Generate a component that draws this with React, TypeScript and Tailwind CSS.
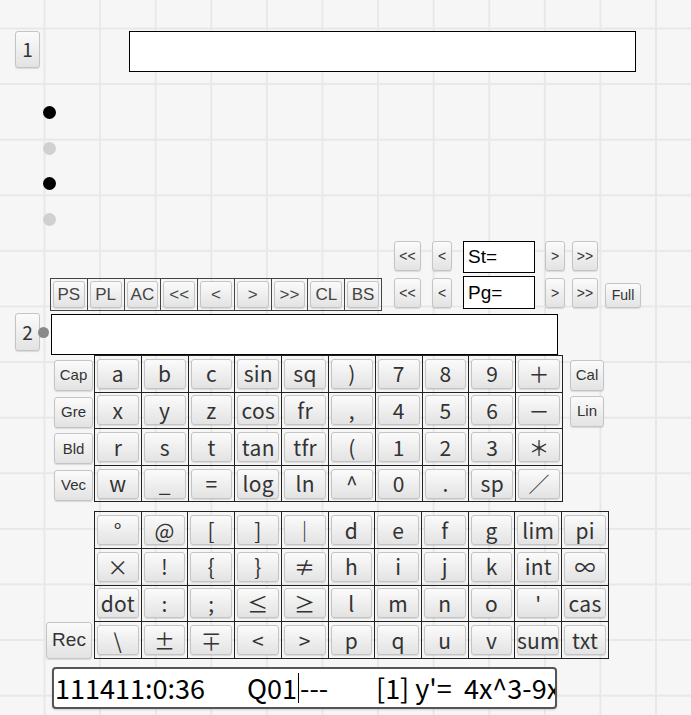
import React from 'react';

const btn =
  'flex items-center justify-center bg-linear-to-b from-[#fbfbfb] to-[#e3e3e3] border border-[#c4c4c4] rounded-[3px] shadow-[0_1px_1px_rgba(0,0,0,0.12)] text-[#333] whitespace-nowrap overflow-hidden';
const sans = "font-['Liberation_Sans',Arial,sans-serif]";
const jp = "font-['Noto_Sans_CJK_JP',sans-serif]";

const pad1: string[][] = [
  ['a', 'b', 'c', 'sin', 'sq', ')', '7', '8', '9', '＋'],
  ['x', 'y', 'z', 'cos', 'fr', ',', '4', '5', '6', '－'],
  ['r', 's', 't', 'tan', 'tfr', '(', '1', '2', '3', '＊'],
  ['w', '_', '=', 'log', 'ln', '^', '0', '.', 'sp', '／'],
];

const pad2: string[][] = [
  ['°', '@', '[', ']', '｜', 'd', 'e', 'f', 'g', 'lim', 'pi'],
  ['×', '!', '{', '}', '≠', 'h', 'i', 'j', 'k', 'int', '∞'],
  ['dot', ':', ';', '≤', '≥', 'l', 'm', 'n', 'o', "'", 'cas'],
  ['\\', '±', '∓', '<', '>', 'p', 'q', 'u', 'v', 'sum', 'txt'],
];

const tools = ['PS', 'PL', 'AC', '<<', '<', '>', '>>', 'CL', 'BS'];

// keypad table, each cell holds one button
const KeyTable: React.FC<{ rows: string[][]; width: string }> = ({ rows, width }) => (
  <table className={`border-collapse table-fixed ${width}`}>
    <tbody>
      {rows.map((row, r) => (
        <tr key={r} className="h-[36.6px]">
          {row.map((k, c) => (
            <td key={c} className="border border-[#222] p-[2px]">
              <div className={`${btn} ${jp} h-[30px] text-[21px] leading-none tracking-[0.3px] text-[#3a3a3a]`}>{k}</div>
            </td>
          ))}
        </tr>
      ))}
    </tbody>
  </table>
);

const SideBtn: React.FC<{ label: string; w: string }> = ({ label, w }) => (
  <div className={`${btn} ${sans} ${w} h-[31px] text-[15px] text-[#222]`}>{label}</div>
);

const NavBtn: React.FC<{ label: string; w: string; extra?: string }> = ({ label, w, extra }) => (
  <div className={`${btn} ${sans} ${w} h-[30px] text-[14px] text-[#222] ${extra ?? ''}`}>{label}</div>
);

export default function App() {
  return (
    <div className="w-[691px] h-[715px] overflow-hidden bg-[#f6f6f6] bg-[linear-gradient(90deg,#e8e8e8_2px,transparent_2px),linear-gradient(#e8e8e8_2px,transparent_2px)] bg-[length:55.6px_55.6px] bg-[position:43.5px_27.5px]">
      {/* Row 1: index + title box */}
      <div className="flex items-start pt-[31px]">
        <div className={`${btn} ${jp} ml-[15px] w-[25px] h-[37px] text-[19px] text-[#222]`}>1</div>
        <div className="ml-[89px] w-[507px] h-[41px] bg-white border-[1.5px] border-black" />
      </div>

      {/* bullets */}
      <div className="ml-[43px] mt-[34px] flex flex-col gap-[22.7px]">
        <div className="w-[13px] h-[13px] rounded-full bg-black" />
        <div className="w-[13px] h-[13px] rounded-full bg-[#d0d0d0]" />
        <div className="w-[13px] h-[13px] rounded-full bg-black" />
        <div className="w-[13px] h-[13px] rounded-full bg-[#d0d0d0]" />
      </div>

      {/* St row */}
      <div className="flex items-start mt-[15px] pl-[394px]">
        <NavBtn label="<<" w="w-[27px]" />
        <NavBtn label="<" w="w-[20px]" extra="ml-[11px]" />
        <div className={`${sans} ml-[11px] w-[72px] h-[32px] bg-white border-[1.5px] border-black text-[19px] leading-[30px] pl-[4px] text-black`}>St=</div>
        <NavBtn label=">" w="w-[20px]" extra="ml-[10px]" />
        <NavBtn label=">>" w="w-[26px]" extra="ml-[7px]" />
      </div>

      {/* toolbar + Pg row */}
      <div className="flex items-start mt-[3px]">
        <table className="ml-[50px] mt-[2px] w-[332px] h-[33px] border-collapse table-fixed">
          <tbody>
            <tr>
              {tools.map((t, i) => (
                <td key={i} className="border border-[#444] p-[2px]">
                  <div className={`${btn} ${sans} h-[27px] text-[17px] text-[#444]`}>{t}</div>
                </td>
              ))}
            </tr>
          </tbody>
        </table>
        <NavBtn label="<<" w="w-[27px]" extra="ml-[12px] mt-[2px]" />
        <NavBtn label="<" w="w-[20px]" extra="ml-[11px] mt-[2px]" />
        <div className={`${sans} ml-[11px] w-[72px] h-[33px] bg-white border-[1.5px] border-black text-[19px] leading-[31px] pl-[4px] text-black`}>Pg=</div>
        <NavBtn label=">" w="w-[20px]" extra="ml-[10px] mt-[2px]" />
        <NavBtn label=">>" w="w-[26px]" extra="ml-[7px] mt-[2px]" />
        <div className={`${btn} ${sans} ml-[7px] mt-[7px] w-[36px] h-[25px] text-[14px] text-[#222]`}>Full</div>
      </div>

      {/* Row 2: index + input */}
      <div className="flex items-start mt-[2px]">
        <div className={`${btn} ${jp} ml-[15px] w-[25px] h-[38px] text-[19px] text-[#222]`}>2</div>
        <div className="ml-[-2px] mt-[14px] w-[11px] h-[11px] rounded-full bg-[#888]" />
        <div className="ml-[2px] mt-px w-[507px] h-[41px] bg-white border-[1.5px] border-black" />
      </div>

      {/* main keypad */}
      <div className="flex items-start">
        <div className="ml-[54px] pt-[5px] flex flex-col gap-[5.6px]">
          <SideBtn label="Cap" w="w-[39px]" />
          <SideBtn label="Gre" w="w-[39px]" />
          <SideBtn label="Bld" w="w-[39px]" />
          <SideBtn label="Vec" w="w-[39px]" />
        </div>
        <div className="ml-px">
          <KeyTable rows={pad1} width="w-[469px]" />
        </div>
        <div className="ml-[7px] pt-[5px] flex flex-col gap-[5px]">
          <SideBtn label="Cal" w="w-[34px]" />
          <SideBtn label="Lin" w="w-[34px]" />
        </div>
      </div>

      {/* symbol keypad */}
      <div className="flex items-end mt-[9px]">
        <div className={`${btn} ${sans} ml-[46px] w-[46px] h-[37px] text-[19px] text-[#222]`}>Rec</div>
        <div className="ml-[2px]">
          <KeyTable rows={pad2} width="w-[515px]" />
        </div>
      </div>

      {/* status line */}
      <div className={`${jp} ml-[52px] mt-[8px] w-[505px] h-[42px] bg-white border-2 border-[#555] rounded-[4px] shadow-[0_1px_2px_rgba(0,0,0,0.15)] overflow-hidden whitespace-pre text-[27px] leading-[38px] text-black pl-[1px] flex items-center`}>
        <span className="inline-block w-[192px] shrink-0">111411:0:36</span>
        <span className="inline-flex items-center w-[129px] shrink-0">
          Q01<span className="inline-block w-px h-[30px] bg-black mx-[1px]" />---
        </span>
        <span className="shrink-0">[1] y'=  4x^3-9x</span>
      </div>
    </div>
  );
}
